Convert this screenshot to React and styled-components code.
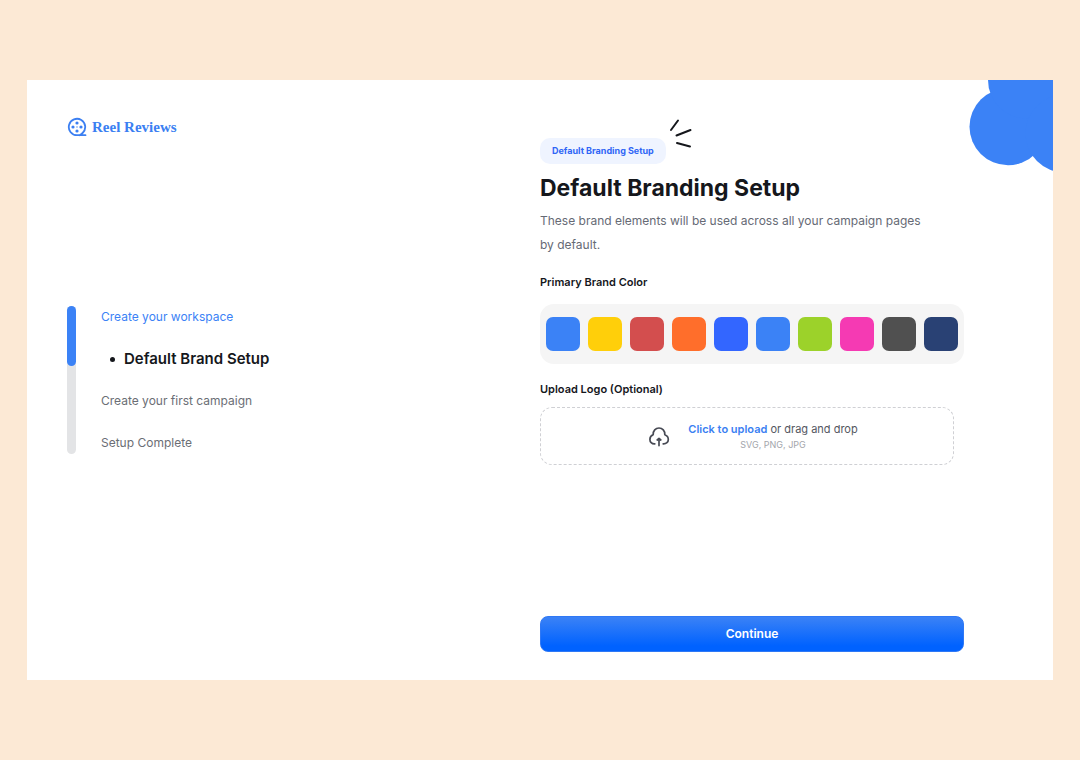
import React, { useState } from 'react'
import styled, { createGlobalStyle } from 'styled-components'

const GlobalStyle = createGlobalStyle`
  * {
    box-sizing: border-box;
  }

  body {
    margin: 0;
    background: #fce9d5;
    color: #15171c;
    font-family: Inter, "Liberation Sans", sans-serif;
    font-size: 12px;
  }
`

const Page = styled.div`
  display: flex;
  min-height: 100vh;
  padding: 80px 27px;
`

const Card = styled.main`
  position: relative;
  flex: 1;
  display: grid;
  grid-template-columns: 1fr 1fr;
  background: #fff;
  overflow: hidden;
`

const Bubbles = styled.svg`
  position: absolute;
  top: 0;
  right: 0;
  width: 84px;
  height: 92px;
  fill: #3b82f6;
`

const Sidebar = styled.aside`
  display: flex;
  flex-direction: column;
  gap: 168px;
  padding: 36px 40px;
`

const Brand = styled.a`
  display: flex;
  align-items: center;
  gap: 5px;
  color: #3b7ff2;
  font-family: "Liberation Serif", serif;
  font-size: 15px;
  font-weight: 700;
  line-height: 22px;
  text-decoration: none;
`

const Progress = styled.div`
  display: flex;
  gap: 25px;
`

const Track = styled.div`
  width: 9px;
  background: #e3e4e6;
  border-radius: 5px;
`

const TrackFill = styled.div`
  height: 60px;
  background: #3b82f6;
  border-radius: 5px;
`

const Steps = styled.ol`
  display: flex;
  flex-direction: column;
  gap: 20px;
  margin: 0;
  padding: 0;
  list-style: none;
`

const Step = styled.li`
  display: flex;
  align-items: center;
  gap: 9px;
  padding-left: ${({ $state }) => ($state === 'current' ? '9px' : '0')};
  color: ${({ $state }) =>
    $state === 'done' ? '#3b82f6' : $state === 'current' ? '#15171c' : '#6b6e75'};
  font-size: ${({ $state }) => ($state === 'current' ? '15px' : '12px')};
  font-weight: ${({ $state }) => ($state === 'current' ? 600 : 400)};
  line-height: 22px;

  &::before {
    content: '';
    display: ${({ $state }) => ($state === 'current' ? 'block' : 'none')};
    width: 5px;
    height: 5px;
    border-radius: 50%;
    background: currentColor;
  }
`

const Content = styled.form`
  display: flex;
  flex-direction: column;
  padding: 58px 89px 28px 0;
`

const Tag = styled.span`
  position: relative;
  align-self: flex-start;
  padding: 0 12px;
  border-radius: 10px;
  background: #eff4ff;
  color: #2f66f6;
  font-size: 9px;
  font-weight: 700;
  line-height: 26px;
`

const Spark = styled.svg`
  position: absolute;
  left: 100%;
  bottom: 14px;
  width: 26px;
  height: 32px;
  fill: none;
  stroke: #15171c;
  stroke-width: 2;
  stroke-linecap: round;
`

const Title = styled.h1`
  margin: 8px 0 5px;
  font-size: 23px;
  font-weight: 700;
  line-height: 32px;
`

const Lead = styled.p`
  margin: 0 0 15px;
  padding-right: 40px;
  color: #666a75;
  line-height: 24px;
`

const Label = styled.h2`
  margin: 0;
  font-size: 11px;
  font-weight: 600;
  line-height: 20px;
`

const Palette = styled.div`
  display: flex;
  justify-content: space-between;
  margin: 12px 0 15px;
  padding: 13px 6px;
  border-radius: 14px;
  background: #f5f5f5;
`

const Swatch = styled.input`
  appearance: none;
  width: 34px;
  height: 34px;
  margin: 0;
  border-radius: 7px;
  background: ${({ $color }) => $color};
  cursor: pointer;
`

const Dropzone = styled.label`
  display: flex;
  align-items: center;
  justify-content: center;
  gap: 18px;
  margin: 8px 10px 0 0;
  padding: 12px 12px 12px 24px;
  border: 1px dashed #cfd0d4;
  border-radius: 12px;
  cursor: pointer;
`

const FileInput = styled.input`
  position: absolute;
  width: 1px;
  height: 1px;
  opacity: 0;
`

const DropText = styled.span`
  color: #54575f;
  font-size: 11px;
  line-height: 18px;
  text-align: center;

  b {
    color: #3b7ff2;
    font-weight: 600;
  }

  small {
    display: block;
    color: #a3a5ab;
    font-size: 9px;
    line-height: 14px;
  }
`

const Submit = styled.button`
  margin-top: auto;
  padding: 0;
  border: 1px solid #2f78f5;
  border-radius: 8px;
  background: linear-gradient(#3b82f6, #0062ff 85%);
  color: #fff;
  font: inherit;
  font-weight: 600;
  line-height: 34px;
  cursor: pointer;
`

const ReelIcon = () => (
  <svg width="20" height="20" viewBox="0 0 20 20" fill="none" stroke="currentColor" aria-hidden="true">
    <path d="M18.5 18.2H10A8.2 8.2 0 1 1 15.6 16Q14.2 17.4 12.4 18.2" strokeWidth="1.8" strokeLinecap="round" />
    <g fill="currentColor" stroke="none">
      <circle cx="10" cy="6" r="1.6" />
      <circle cx="6" cy="10" r="1.6" />
      <circle cx="14" cy="10" r="1.6" />
      <circle cx="10" cy="14" r="1.6" />
      <circle cx="10" cy="10" r="0.7" />
    </g>
  </svg>
)

const CloudIcon = () => (
  <svg width="22" height="22" viewBox="0 0 22 22" fill="none" stroke="#474a54" strokeWidth="1.7" strokeLinecap="round" strokeLinejoin="round" aria-hidden="true">
    <path d="M6.8 18.9C3.7 19.1 1.9 16.9 1.9 14.4C1.9 12.2 3.2 10.4 5.2 9.7C4.8 5.6 7.7 3 11 3S17.2 5.6 16.8 9.7C18.8 10.4 20.3 12.2 20.3 14.4C20.3 16.9 18.3 19.1 15.2 18.9" />
    <path d="M11 20.6V14M9.2 15L11 13.4L12.8 15" />
  </svg>
)

const steps = [
  { name: 'Create your workspace', state: 'done' },
  { name: 'Default Brand Setup', state: 'current' },
  { name: 'Create your first campaign', state: 'next' },
  { name: 'Setup Complete', state: 'next' },
]

const colors = [
  '#3b82f6',
  '#ffcf0a',
  '#d34e4e',
  '#ff6e2b',
  '#3366ff',
  '#3b82f6',
  '#9cd22a',
  '#f53ab3',
  '#505050',
  '#294174',
]

const App = () => {
  const [picked, setPicked] = useState(0)

  return (
    <Page>
      <GlobalStyle />
      <Card>
        <Bubbles viewBox="0 0 84 92" aria-hidden="true">
          <circle cx="39" cy="46.7" r="38.5" />
          <circle cx="57.5" cy="0" r="38.5" />
          <circle cx="95.5" cy="53.5" r="39" />
        </Bubbles>

        <Sidebar>
          <Brand href="#">
            <ReelIcon />
            Reel Reviews
          </Brand>
          <Progress>
            <Track>
              <TrackFill />
            </Track>
            <Steps>
              {steps.map((step) => (
                <Step key={step.name} $state={step.state}>
                  {step.name}
                </Step>
              ))}
            </Steps>
          </Progress>
        </Sidebar>

        <Content onSubmit={(e) => e.preventDefault()}>
          <Tag>
            Default Branding Setup
            <Spark viewBox="0 0 26 32" aria-hidden="true">
              <path d="M5 12L12 2.5M10.5 17.5L24.5 12M11 25L24 28.5" />
            </Spark>
          </Tag>
          <Title>Default Branding Setup</Title>
          <Lead>These brand elements will be used across all your campaign pages by default.</Lead>

          <Label id="brand-color">Primary Brand Color</Label>
          <Palette role="radiogroup" aria-labelledby="brand-color">
            {colors.map((color, i) => (
              <Swatch
                key={i}
                type="radio"
                name="color"
                aria-label={color}
                $color={color}
                checked={picked === i}
                onChange={() => setPicked(i)}
              />
            ))}
          </Palette>

          <Label id="brand-logo">Upload Logo (Optional)</Label>
          <Dropzone>
            <FileInput type="file" accept=".svg,.png,.jpg" aria-labelledby="brand-logo" />
            <CloudIcon />
            <DropText>
              <b>Click to upload</b> or drag and drop
              <small>SVG, PNG, JPG</small>
            </DropText>
          </Dropzone>

          <Submit type="submit">Continue</Submit>
        </Content>
      </Card>
    </Page>
  )
}

export default App
